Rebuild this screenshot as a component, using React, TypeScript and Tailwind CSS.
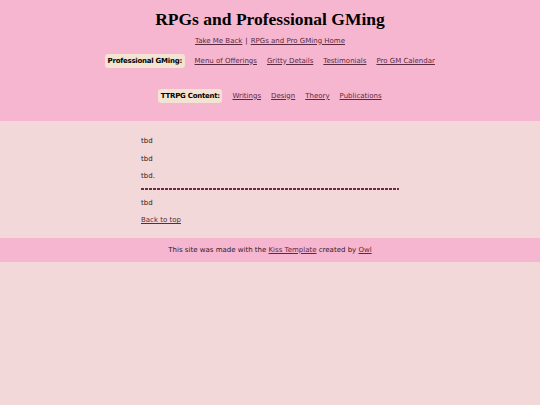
import React from 'react';

const linkCls = 'underline text-[#5b2a41]';

const NavRow: React.FC<{ label: string; links: string[] }> = ({ label, links }) => (
  <div className="flex items-center justify-center gap-[10px]">
    <span className="rounded-[3px] bg-[#f3e3d3] px-[2.5px] py-[3.5px] font-bold tracking-[-0.25px] text-black">{label}</span>
    {links.map(l => (
      <a key={l} href="#" className={linkCls}>{l}</a>
    ))}
  </div>
);

const App: React.FC = () => {
  return (
    <div className="min-h-[405px] bg-[#f2d8d8] text-[7px] leading-none text-[#2a1a1f]" style={{ fontFamily: '"DejaVu Sans", Verdana, sans-serif' }}>
      <header className="flex h-[121px] flex-col items-center bg-[#f7b6cf] pt-[11px]">
        <h1 className="text-[17.5px] font-bold leading-none text-black" style={{ fontFamily: '"Liberation Serif", "Times New Roman", serif' }}>
          RPGs and Professional GMing
        </h1>
        <div className="mt-[9px]">
          <a href="#" className={linkCls}>Take Me Back</a>
          <span className="mx-[3px]">|</span>
          <a href="#" className={linkCls}>RPGs and Pro GMing Home</a>
        </div>
        <div className="mt-[9.5px]">
          <NavRow label="Professional GMing:" links={['Menu of Offerings', 'Gritty Details', 'Testimonials', 'Pro GM Calendar']} />
        </div>
        <div className="mt-[21px]">
          <NavRow label="TTRPG Content:" links={['Writings', 'Design', 'Theory', 'Publications']} />
        </div>
      </header>

      <main className="mx-auto flex w-[258px] flex-col pt-[17px] pb-[14px]">
        <p>tbd</p>
        <p className="mt-[11px]">tbd</p>
        <p className="mt-[10px]">tbd.</p>
        <div className="mt-[8px] h-[2px] bg-[repeating-linear-gradient(90deg,#6b2a45_0_3px,transparent_3px_4px)]" />
        <p className="mt-[10px]">tbd</p>
        <a href="#" className={`${linkCls} mt-[10px] self-start`}>Back to top</a>
      </main>

      <footer className="flex h-[24px] items-center justify-center bg-[#f7b6cf]">
        <span>
          This site was made with the <a href="#" className={linkCls}>Kiss Template</a> created by{' '}
          <a href="#" className={linkCls}>Owl</a>
        </span>
      </footer>
    </div>
  );
};

export default App;
